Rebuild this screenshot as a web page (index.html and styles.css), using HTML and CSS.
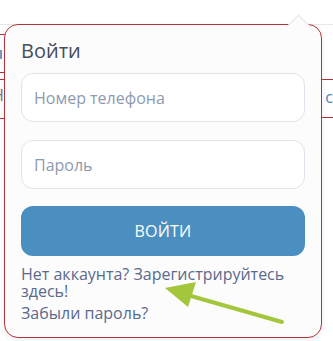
FILE: index.html
```html
<!DOCTYPE html>
<html lang="ru">
<head>
<meta charset="utf-8">
<title>Войти</title>
<link rel="stylesheet" href="styles.css">
</head>
<body>
<div class="page">
  <div class="topbar"></div>
  <div class="table">
    <div class="col col-left">
      <div class="cell c1"></div>
      <div class="cell c2"><span class="mark"></span></div>
      <div class="cell c3"></div>
      <div class="cell c4"><span class="frag">Нн</span></div>
    </div>
    <div class="col col-right">
      <div class="cell r1"></div>
      <div class="cell r2"><span class="frag blue">сі</span></div>
    </div>
  </div>
</div>

<div class="popover">
  <div class="caret"></div>
  <h2 class="title">Войти</h2>
  <form class="form">
    <input class="field" type="text" placeholder="Номер телефона">
    <input class="field" type="password" placeholder="Пароль">
    <button class="btn" type="button">ВОЙТИ</button>
  </form>
  <div class="links">
    <a class="link" href="#">Нет аккаунта? Зарегистрируйтесь здесь!</a>
    <a class="link" href="#">Забыли пароль?</a>
  </div>
</div>

<svg class="arrow" width="333" height="341" viewBox="0 0 333 341">
  <line x1="282" y1="322" x2="184" y2="294" stroke="#a3c63c" stroke-width="4" stroke-linecap="round"/>
  <polygon points="165,288 196,282 188,307" fill="#a3c63c"/>
</svg>
</body>
</html>
```
FILE: styles.css
```css
html, body {
  margin: 0;
  padding: 0;
}
body {
  width: 333px;
  height: 341px;
  overflow: hidden;
  background: #ffffff;
  font-family: "Open Sans", "Noto Sans", sans-serif;
  position: relative;
}
.page {
  display: flex;
  flex-direction: column;
}
.topbar {
  height: 24px;
  border-bottom: 1px solid #e8e8ea;
}
.table {
  display: flex;
  justify-content: space-between;
}
.col-left {
  width: 160px;
}
.col-right {
  width: 160px;
}
.cell {
  border-bottom: 1px solid #b3323b;
  box-sizing: border-box;
  overflow: hidden;
}
.c1 { height: 10px; }
.c2 { height: 38px; padding-top: 15px; }
.c3 { height: 7px; }
.c4 { height: 39px; padding-top: 4px; }
.r1 { height: 55px; }
.r2 { height: 38px; padding-top: 6px; text-align: right; }
.mark {
  display: block;
  width: 2px;
  height: 9px;
  background: #7d96b8;
}
.frag {
  font-size: 16px;
  color: #6a7891;
  margin-left: -8px;
}
.frag.blue {
  color: #4a86c0;
  margin-right: -4px;
}

.popover {
  position: absolute;
  left: 4px;
  top: 24px;
  width: 318px;
  height: 314px;
  box-sizing: border-box;
  border: 1px solid #b3323b;
  border-radius: 14px;
  background: #fcfcfd;
  box-shadow: 0 2px 6px rgba(0, 0, 0, 0.08);
  padding: 12px 16px 0 16px;
}
.caret {
  position: absolute;
  top: -7px;
  right: 14px;
  width: 16px;
  height: 16px;
  background: #fcfcfd;
  border-left: 1px solid #e6e6e8;
  border-top: 1px solid #e6e6e8;
  transform: rotate(45deg);
}
.title {
  margin: 0;
  font-size: 20px;
  font-weight: 400;
  line-height: 27px;
  color: #464e5e;
}
.form {
  display: flex;
  flex-direction: column;
  margin-top: 9px;
}
.field {
  height: 49px;
  box-sizing: border-box;
  border: 1px solid #dfe4ec;
  border-radius: 12px;
  background: #ffffff;
  padding: 0 12px;
  font-family: "Open Sans", "Noto Sans", sans-serif;
  font-size: 16px;
  color: #333;
  outline: none;
}
.field + .field {
  margin-top: 18px;
}
.field::placeholder {
  color: #8d9ab0;
}
.btn {
  margin-top: 17px;
  height: 50px;
  border: none;
  border-radius: 12px;
  background: #4b8fc0;
  color: #ffffff;
  font-family: "Open Sans", "Noto Sans", sans-serif;
  font-size: 16px;
  letter-spacing: 0.2px;
}
.links {
  display: flex;
  flex-direction: column;
  gap: 5px;
  margin-top: 10px;
}
.link {
  font-size: 16px;
  line-height: 17px;
  color: #5a6a8a;
  text-decoration: none;
}
.arrow {
  position: absolute;
  left: 0;
  top: 0;
  pointer-events: none;
}
```
